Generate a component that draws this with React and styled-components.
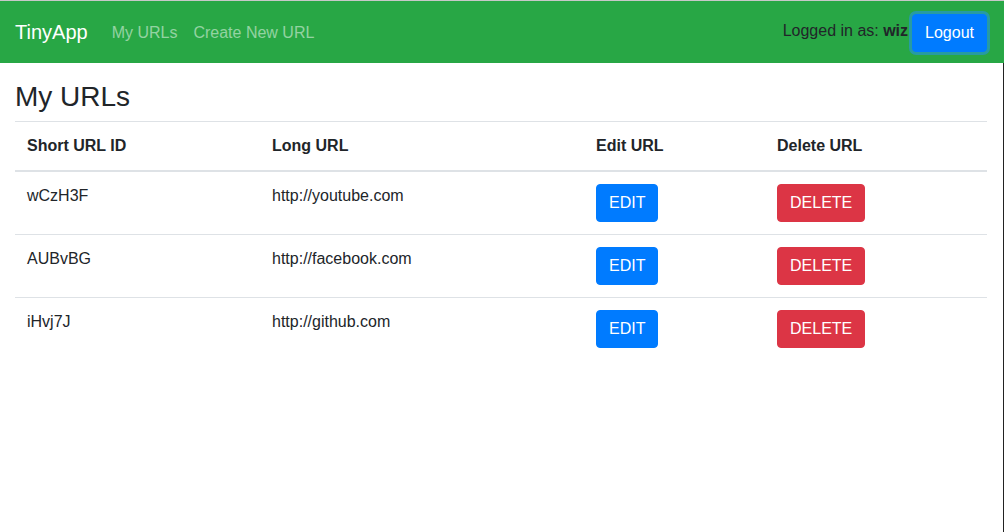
import React from 'react';
import styled, { createGlobalStyle } from 'styled-components';

const GlobalStyle = createGlobalStyle`
  html, body {
    margin: 0;
    padding: 0;
    background: #fff;
  }
  body {
    font-family: "Liberation Sans", Arial, sans-serif;
    font-size: 16px;
    line-height: 1.5;
    color: #212529;
  }
`;

const urls = [
  { id: 'wCzH3F', long: 'http://youtube.com' },
  { id: 'AUBvBG', long: 'http://facebook.com' },
  { id: 'iHvj7J', long: 'http://github.com' },
];

const App = () => (
  <Page>
    <GlobalStyle />
    <Navbar>
      <Brand href="#">TinyApp</Brand>
      <NavLinks>
        <NavLink href="#">My URLs</NavLink>
        <NavLink href="#">Create New URL</NavLink>
      </NavLinks>
      <UserBox>
        <span>
          Logged in as: <strong>wiz</strong>
        </span>
        <Button variant="primary" focused>Logout</Button>
      </UserBox>
    </Navbar>
    <Main>
      <Heading>My URLs</Heading>
      <Table>
        <thead>
          <tr>
            <Th style={{ width: 221 }}>Short URL ID</Th>
            <Th style={{ width: 300 }}>Long URL</Th>
            <Th style={{ width: 157 }}>Edit URL</Th>
            <Th>Delete URL</Th>
          </tr>
        </thead>
        <tbody>
          {urls.map((u) => (
            <tr key={u.id}>
              <Td>{u.id}</Td>
              <Td>{u.long}</Td>
              <Td>
                <Button variant="primary">EDIT</Button>
              </Td>
              <Td>
                <Button variant="danger">DELETE</Button>
              </Td>
            </tr>
          ))}
        </tbody>
      </Table>
    </Main>
  </Page>
);
export default App;

const Page = styled.div`
  width: 1004px;
  height: 532px;
  display: flex;
  flex-direction: column;
  border-top: 1px solid #c8c8c8;
  box-sizing: border-box;
`;

const Navbar = styled.nav`
  height: 62px;
  flex-shrink: 0;
  background: #28a745;
  display: flex;
  align-items: center;
  padding: 0 16px 0 15px;
  box-sizing: border-box;
`;

const Brand = styled.a`
  color: #fff;
  font-size: 20px;
  line-height: 30px;
  text-decoration: none;
  margin-right: 16px;
`;

const NavLinks = styled.div`
  display: flex;
  flex: 1;
  margin-top: 1px;
`;

const NavLink = styled.a`
  color: rgba(255, 255, 255, 0.5);
  text-decoration: none;
  padding: 8px;
`;

const UserBox = styled.div`
  display: flex;
  align-items: center;
  gap: 4px;
  margin-right: 1px;
  span {
    margin-top: -2px;
  }
  strong {
    font-weight: 700;
  }
  button {
    margin-top: 2px;
  }
`;

const Button = styled.button`
  font-family: inherit;
  font-size: 16px;
  line-height: 24px;
  padding: 6px 12px;
  border: 1px solid ${(p) => (p.variant === 'danger' ? '#dc3545' : '#007bff')};
  border-radius: 4px;
  color: #fff;
  background: ${(p) => (p.variant === 'danger' ? '#dc3545' : '#007bff')};
  box-shadow: ${(p) => (p.focused ? '0 0 0 3px rgba(38, 143, 255, 0.5)' : 'none')};
  cursor: pointer;
`;

const Main = styled.main`
  flex: 1;
  padding: 0 16px 0 15px;
  border-right: 1px solid #222;
  box-sizing: border-box;
`;

const Heading = styled.h3`
  font-size: 28px;
  font-weight: 500;
  line-height: 1.2;
  margin: 17px 0 7px;
`;

const Table = styled.table`
  width: 972px;
  border-collapse: collapse;
`;

const Th = styled.th`
  text-align: left;
  font-weight: 700;
  padding: 12px;
  vertical-align: bottom;
  border-top: 1px solid #dee2e6;
  border-bottom: 2px solid #dee2e6;
`;

const Td = styled.td`
  padding: 12px;
  vertical-align: top;
  border-top: 1px solid #dee2e6;
`;
